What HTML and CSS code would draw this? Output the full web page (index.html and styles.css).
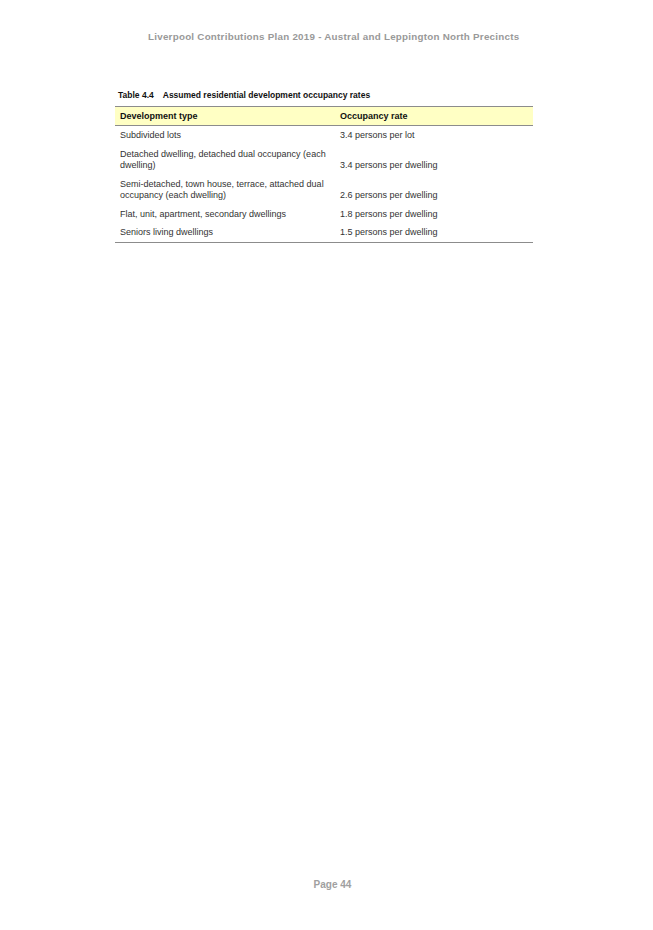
FILE: index.html
```html
<!DOCTYPE html>
<html>
<head>
<meta charset="utf-8">
<link rel="stylesheet" href="styles.css">
</head>
<body>
<div class="page">
  <header class="running-head">Liverpool Contributions Plan 2019 - Austral and Leppington North Precincts</header>
  <section class="table-block">
    <div class="caption"><span class="cap-num">Table 4.4</span><span>Assumed residential development occupancy rates</span></div>
    <table class="rates">
      <thead>
        <tr><th class="c1">Development type</th><th class="c2">Occupancy rate</th></tr>
      </thead>
      <tbody>
        <tr><td>Subdivided lots</td><td>3.4 persons per lot</td></tr>
        <tr><td>Detached dwelling, detached dual occupancy (each dwelling)</td><td>3.4 persons per dwelling</td></tr>
        <tr><td>Semi-detached, town house, terrace, attached dual occupancy (each dwelling)</td><td>2.6 persons per dwelling</td></tr>
        <tr><td>Flat, unit, apartment, secondary dwellings</td><td>1.8 persons per dwelling</td></tr>
        <tr><td>Seniors living dwellings</td><td>1.5 persons per dwelling</td></tr>
      </tbody>
    </table>
  </section>
  <footer class="page-num">Page 44</footer>
</div>
</body>
</html>
```
FILE: styles.css
```css
html, body {
  margin: 0;
  padding: 0;
  background: #ffffff;
}
.page {
  width: 653px;
  height: 930px;
  display: flex;
  flex-direction: column;
  font-family: "Liberation Sans", Arial, sans-serif;
}
.running-head {
  margin-top: 30px;
  padding-left: 148px;
  font-size: 9.8px;
  font-weight: bold;
  color: #999999;
  letter-spacing: 0.25px;
  line-height: 14px;
}
.table-block {
  margin-top: 45px;
  padding-left: 115px;
}
.caption {
  display: flex;
  gap: 9px;
  padding-left: 3px;
  font-size: 8.5px;
  font-weight: bold;
  color: #111;
  line-height: 12px;
}
.rates {
  margin-top: 5px;
  border-collapse: collapse;
  width: 418px;
  table-layout: fixed;
  font-size: 9px;
  color: #333;
}
.rates th {
  background: #ffffc4;
  border-top: 1px solid #8c8c8c;
  border-bottom: 1px solid #8c8c8c;
  text-align: left;
  font-weight: bold;
  color: #111;
  line-height: 12px;
  padding: 3px 5px 3px 5px;
  height: 12px;
}
.rates th.c1 { width: 213px; padding-right: 0; }
.rates td {
  vertical-align: bottom;
  line-height: 11.5px;
  padding: 4px 5px 3px 5px;
}
.rates td:first-child { padding-right: 0; }
.rates td + td, .rates th + th { padding-left: 7px; }
.rates tbody tr:last-child td {
  border-bottom: 1px solid #8c8c8c;
}
.page-num {
  margin-top: auto;
  margin-bottom: 40px;
  text-align: center;
  font-size: 10px;
  font-weight: bold;
  color: #a0a0a0;
  padding-left: 12px;
}
```
